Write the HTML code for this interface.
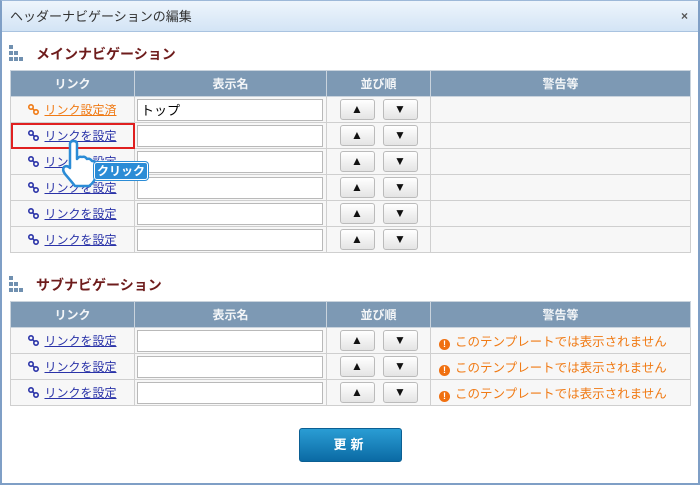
<!DOCTYPE html><html><head><meta charset="utf-8"><style>
*{box-sizing:border-box;margin:0;padding:0}
body{width:700px;height:485px;overflow:hidden;background:#fff;font-family:"Liberation Sans","Noto Sans CJK JP",sans-serif;font-size:12px;position:relative}
.frame{position:absolute;left:0;top:0;width:700px;height:485px;border:2px solid #7f9fc6;border-top:1px solid #9db8d8}
.title{position:absolute;left:2px;top:1px;width:696px;height:31px;background:linear-gradient(#eef5fc,#d3e4f5);border-bottom:1px solid #a9c3e0;color:#333;font-size:13px;line-height:31px;padding-left:8px}
.x{position:absolute;right:10px;top:0;color:#555;font-size:12px;font-weight:bold}
.sec{position:absolute;left:36px;color:#6e1c1c;font-weight:bold;font-size:14px}
.ic{position:absolute;left:9px;width:17px;height:16px}
table{position:absolute;left:10px;border-collapse:collapse;width:681px;table-layout:fixed}
th{background:#7d99b4;color:#f4f6f8;font-weight:bold;height:26px;border:1px solid #c9d3dd;font-size:12px}
td{background:#f7f7f7;border:1px solid #cfcfcf;height:26px;text-align:center;font-size:12px}
td.n{text-align:left;padding-left:2px}
input{width:186px;height:22px;border:1px solid #b9b9b9;background:#fff;font-size:13px;padding-left:3px;font-family:inherit;display:block}
.b{display:inline-block;width:35px;height:21px;border:1px solid #bbb;border-radius:3px;background:linear-gradient(#fff,#e4e4e4);font-size:12px;line-height:19px;color:#111;margin:0 4px;vertical-align:middle}
a{color:#2a33a8;text-decoration:underline}
.lk{display:inline-block;width:11px;height:11px;margin-right:5px;vertical-align:-1px}
.w{text-align:left;padding-left:8px;color:#f07a14;font-size:12.5px}
.wi{display:inline-block;width:11px;height:11px;border-radius:50%;background:#f07010;color:#fff;font-size:9px;font-weight:bold;text-align:center;line-height:11px;margin-right:5px;vertical-align:-1px}
.btn{position:absolute;left:299px;top:428px;width:103px;height:34px;border-radius:3px;background:linear-gradient(#2a9dd4,#0b6aa4);border:1px solid #0b5f93;color:#fff;font-weight:bold;font-size:13px;text-align:center;line-height:32px;letter-spacing:4px}
</style></head><body>
<svg width="0" height="0" style="position:absolute"><defs><symbol id="l" viewBox="0 0 11 11"><circle cx="3" cy="3" r="2.2" fill="none" stroke="currentColor" stroke-width="1.6"/><circle cx="8" cy="8" r="2.2" fill="none" stroke="currentColor" stroke-width="1.6"/><path d="M4.5 4.5L6.5 6.5" stroke="currentColor" stroke-width="1.6"/></symbol><symbol id="s" viewBox="0 0 17 16"><g fill="#7090b0"><rect x="0" y="0" width="4" height="4"/><rect x="0" y="6" width="4" height="4"/><rect x="5" y="6" width="4" height="4"/><rect x="0" y="12" width="4" height="4"/><rect x="5" y="12" width="4" height="4"/><rect x="10" y="12" width="4" height="4"/></g></symbol></defs></svg>
<div class="frame"></div>
<div class="title">ヘッダーナビゲーションの編集<span class="x">×</span></div>
<svg class="ic" style="top:45px"><use href="#s"/></svg>
<div class="sec" style="top:44px">メインナビゲーション</div>
<table style="top:70px"><colgroup><col style="width:124px"><col style="width:192px"><col style="width:104px"><col></colgroup>
<tr><th>リンク</th><th>表示名</th><th>並び順</th><th>警告等</th></tr>
<tr><td><svg class="lk" style="color:#f07a14"><use href="#l"/></svg><a style="color:#f07a14">リンク設定済</a></td><td class="n"><input value="トップ"></td><td><span class="b">▲</span><span class="b">▼</span></td><td></td></tr>
<tr><td style="outline:2px solid #e02020;outline-offset:-2px"><svg class="lk" style="color:#2a33a8"><use href="#l"/></svg><a>リンクを設定</a></td><td class="n"><input></td><td><span class="b">▲</span><span class="b">▼</span></td><td></td></tr>
<tr><td><svg class="lk" style="color:#2a33a8"><use href="#l"/></svg><a>リンクを設定</a></td><td class="n"><input></td><td><span class="b">▲</span><span class="b">▼</span></td><td></td></tr>
<tr><td><svg class="lk" style="color:#2a33a8"><use href="#l"/></svg><a>リンクを設定</a></td><td class="n"><input></td><td><span class="b">▲</span><span class="b">▼</span></td><td></td></tr>
<tr><td><svg class="lk" style="color:#2a33a8"><use href="#l"/></svg><a>リンクを設定</a></td><td class="n"><input></td><td><span class="b">▲</span><span class="b">▼</span></td><td></td></tr>
<tr><td><svg class="lk" style="color:#2a33a8"><use href="#l"/></svg><a>リンクを設定</a></td><td class="n"><input></td><td><span class="b">▲</span><span class="b">▼</span></td><td></td></tr>
</table>
<svg class="ic" style="top:276px"><use href="#s"/></svg>
<div class="sec" style="top:275px">サブナビゲーション</div>
<table style="top:301px"><colgroup><col style="width:124px"><col style="width:192px"><col style="width:104px"><col></colgroup>
<tr><th>リンク</th><th>表示名</th><th>並び順</th><th>警告等</th></tr>
<tr><td><svg class="lk" style="color:#2a33a8"><use href="#l"/></svg><a>リンクを設定</a></td><td class="n"><input></td><td><span class="b">▲</span><span class="b">▼</span></td><td class="w"><span class="wi">!</span>このテンプレートでは表示されません</td></tr>
<tr><td><svg class="lk" style="color:#2a33a8"><use href="#l"/></svg><a>リンクを設定</a></td><td class="n"><input></td><td><span class="b">▲</span><span class="b">▼</span></td><td class="w"><span class="wi">!</span>このテンプレートでは表示されません</td></tr>
<tr><td><svg class="lk" style="color:#2a33a8"><use href="#l"/></svg><a>リンクを設定</a></td><td class="n"><input></td><td><span class="b">▲</span><span class="b">▼</span></td><td class="w"><span class="wi">!</span>このテンプレートでは表示されません</td></tr>
</table>
<svg style="position:absolute;left:60px;top:140px" width="46" height="48" viewBox="0 0 46 48"><path d="M10 4 Q10 1 13.5 1 Q17 1 17 4 L17 19 Q19 16 22 17 Q25 16 27 19 Q30 18 32 21 Q36 21 36 25 L36 35 Q35 42 29 46 L15 46 Q11 41 5 34 Q2 30 4 27 Q7 25 10 28 Z" fill="#fff" stroke="#2b8cd6" stroke-width="2.5" stroke-linejoin="round"/></svg>
<div style="position:absolute;left:94px;top:162px;width:54px;height:18px;background:#2b8cd6;border:1px solid #fff;border-radius:3px;color:#fff;font-weight:bold;font-size:12px;line-height:16px;text-align:center;box-shadow:0 0 0 1px #2b8cd6">クリック</div>
<div class="btn">更新</div>
</body></html>
